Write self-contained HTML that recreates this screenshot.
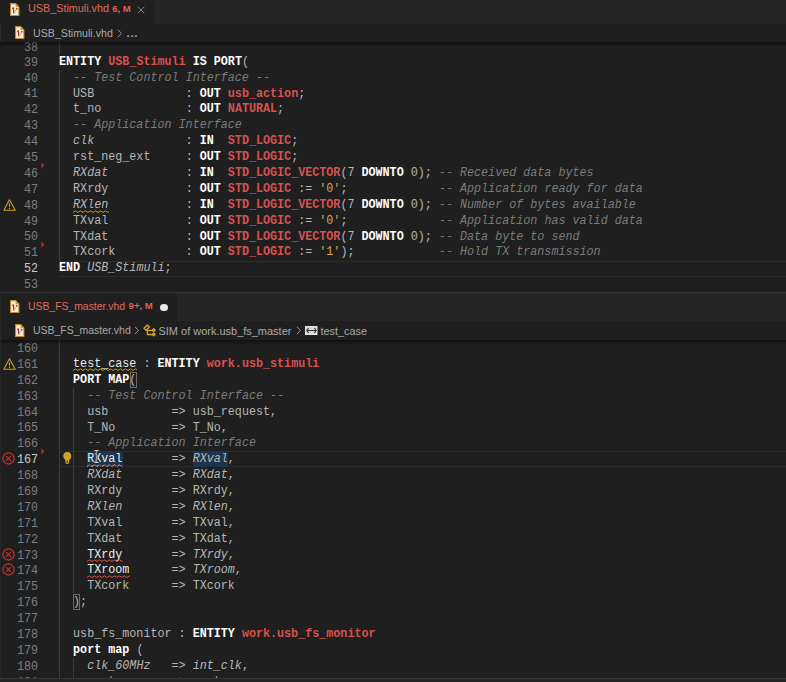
<!DOCTYPE html><html><head><meta charset="utf-8"><style>
*{margin:0;padding:0;box-sizing:border-box}
html,body{width:786px;height:682px;overflow:hidden;background:#1f1f1f}
body{position:relative;font-family:"Liberation Sans",sans-serif}
.abs{position:absolute}
.tabbar{position:absolute;left:0;width:786px;height:28px;background:#262626}
.tab{position:absolute;left:0;top:0;height:28px;background:#1f1f1f}
.tabtxt{position:absolute;font-size:11px;color:#e06a5c;white-space:pre;line-height:14px}
.crumb{position:absolute;left:0;width:786px;background:#1f1f1f}
.crtxt{position:absolute;font-size:11px;color:#a9a9a9;white-space:pre;line-height:14px}
.shadow{position:absolute;left:0;width:786px;height:5px;background:linear-gradient(rgba(0,0,0,0.45),rgba(0,0,0,0))}
.ln{position:absolute;left:0;width:38px;text-align:right;transform:scaleX(0.9530969060707694);transform-origin:right top;font-family:"Liberation Mono",monospace;font-size:12.3px;line-height:15.885px;height:15.885px;color:#7e7e7e;white-space:pre}
.ln.act{color:#c8c8c8}
.cl{position:absolute;left:59.3px;transform:scaleX(0.9530969060707694);transform-origin:left top;font-family:"Liberation Mono",monospace;font-size:12.3px;line-height:15.885px;height:15.885px;white-space:pre;color:#bababa}
.i,.p{color:#b6b6b6}
.ii{color:#b6b6b6;font-style:italic}
.w{color:#ececec}
.k{color:#ffffff;font-weight:bold}
.t{color:#d6524e;font-weight:bold}
.c{color:#7b7b7b;font-style:italic}
.s{color:#d7a54b}
.g{position:absolute;width:1px}
.curline{position:absolute;left:59px;width:727px;border-top:1px solid #2c2c2c;border-bottom:1px solid #2c2c2c}
</style></head><body><div class="tabbar" style="top:-4px"><div class="tab" style="width:155px"></div></div>
<svg class="abs" style="left:10px;top:3px" width="10" height="13" viewBox="0 0 10 13"><path d="M0.6 0.6H5.6L8.9 3.9V12.4H0.6Z" fill="#f6f1d6" stroke="#bf8f2e" stroke-width="1.05"/><path d="M5.6 0.6V3.9H8.9Z" fill="#c99a38"/><path d="M2.1 5.3L3.4 5.1L3.9 10.5" fill="none" stroke="#c3282b" stroke-width="1.35"/><path d="M6.6 5.9L4.2 10.5" fill="none" stroke="#cbb89e" stroke-width="1"/><circle cx="6.7" cy="5.7" r="0.85" fill="#c3282b"/></svg>
<div class="tabtxt" style="left:28px;top:1.3px;font-size:10.8px">USB_Stimuli.vhd</div>
<div class="tabtxt" style="left:112.2px;top:1.5px;font-size:9.6px;font-weight:bold;color:#d9665a">6, M</div>
<svg class="abs" style="left:137px;top:6px" width="8" height="8" viewBox="0 0 8 8"><path d="M0.7 0.7L7.3 7.3M7.3 0.7L0.7 7.3" stroke="#8c8c8c" stroke-width="0.9"/></svg>
<div class="crumb" style="top:24px;height:17.5px"></div>
<div class="abs" style="left:0;top:24px;width:1px;height:17.5px;background:#2c2c2c"></div>
<svg class="abs" style="left:15px;top:26px" width="10" height="13" viewBox="0 0 10 13"><path d="M0.6 0.6H5.6L8.9 3.9V12.4H0.6Z" fill="#f6f1d6" stroke="#bf8f2e" stroke-width="1.05"/><path d="M5.6 0.6V3.9H8.9Z" fill="#c99a38"/><path d="M2.1 5.3L3.4 5.1L3.9 10.5" fill="none" stroke="#c3282b" stroke-width="1.35"/><path d="M6.6 5.9L4.2 10.5" fill="none" stroke="#cbb89e" stroke-width="1"/><circle cx="6.7" cy="5.7" r="0.85" fill="#c3282b"/></svg>
<div class="crtxt" style="left:33px;top:25.5px;font-size:10.65px">USB_Stimuli.vhd</div>
<svg class="abs" style="left:117.3px;top:28.6px" width="6" height="9" viewBox="0 0 6 9"><path d="M0.8 0.7L4.6 4.4L0.8 8.1" fill="none" stroke="#9a9a9a" stroke-width="1"/></svg>
<div class="crtxt" style="left:126.6px;top:25.5px;font-size:11.6px;letter-spacing:0.6px;font-weight:bold">...</div>
<div class="abs" style="left:0;top:41.5px;width:786px;height:250.5px;overflow:hidden"><div class="abs" style="left:0;top:-41.5px;width:786px;height:682px">
<div class="curline" style="top:260.99px;height:15.88px"></div>
<div class="g" style="left:59.0px;top:0.00px;height:54.48px;background:#3c3c3c"></div>
<div class="g" style="left:59.0px;top:70.37px;height:190.62px;background:#3c3c3c"></div>
<div class="ln" style="top:40.80px">38</div><div class="ln" style="top:55.69px">39</div><div class="cl" style="top:54.78px"><span class="k">ENTITY</span><span class="i"> </span><span class="t">USB_Stimuli</span><span class="i"> </span><span class="k">IS</span><span class="i"> </span><span class="k">PORT</span><span class="p">(</span></div><div class="ln" style="top:71.57px">40</div><div class="cl" style="top:70.67px"><span class="i">  </span><span class="c">-- Test Control Interface --</span></div><div class="ln" style="top:87.45px">41</div><div class="cl" style="top:86.55px"><span class="i">  </span><span class="i">USB</span><span class="i">             </span><span class="p">: </span><span class="k">OUT</span><span class="i"> </span><span class="t">usb_action</span><span class="p">;</span></div><div class="ln" style="top:103.34px">42</div><div class="cl" style="top:102.44px"><span class="i">  </span><span class="i">t_no</span><span class="i">            </span><span class="p">: </span><span class="k">OUT</span><span class="i"> </span><span class="t">NATURAL</span><span class="p">;</span></div><div class="ln" style="top:119.23px">43</div><div class="cl" style="top:118.33px"><span class="i">  </span><span class="c">-- Application Interface</span></div><div class="ln" style="top:135.11px">44</div><div class="cl" style="top:134.21px"><span class="i">  </span><span class="ii">clk</span><span class="i">             </span><span class="p">: </span><span class="k">IN</span><span class="i">  </span><span class="t">STD_LOGIC</span><span class="p">;</span></div><div class="ln" style="top:150.99px">45</div><div class="cl" style="top:150.09px"><span class="i">  </span><span class="i">rst_neg_ext</span><span class="i">     </span><span class="p">: </span><span class="k">OUT</span><span class="i"> </span><span class="t">STD_LOGIC</span><span class="p">;</span></div><div class="ln" style="top:166.88px">46</div><div class="cl" style="top:165.98px"><span class="i">  </span><span class="ii">RXdat</span><span class="i">           </span><span class="p">: </span><span class="k">IN</span><span class="i">  </span><span class="t">STD_LOGIC_VECTOR</span><span class="p">(7 </span><span class="k">DOWNTO</span><span class="p"> 0); </span><span class="c">-- Received data bytes</span></div><div class="ln" style="top:182.76px">47</div><div class="cl" style="top:181.87px"><span class="i">  </span><span class="i">RXrdy</span><span class="i">           </span><span class="p">: </span><span class="k">OUT</span><span class="i"> </span><span class="t">STD_LOGIC</span><span class="p"> := </span><span class="s">&#x27;0&#x27;</span><span class="p">;</span><span class="i">             </span><span class="c">-- Application ready for data</span></div><div class="ln" style="top:198.65px">48</div><div class="cl" style="top:197.75px"><span class="i">  </span><span class="ii">RXlen</span><span class="i">           </span><span class="p">: </span><span class="k">IN</span><span class="i">  </span><span class="t">STD_LOGIC_VECTOR</span><span class="p">(7 </span><span class="k">DOWNTO</span><span class="p"> 0); </span><span class="c">-- Number of bytes available</span></div><div class="ln" style="top:214.53px">49</div><div class="cl" style="top:213.63px"><span class="i">  </span><span class="i">TXval</span><span class="i">           </span><span class="p">: </span><span class="k">OUT</span><span class="i"> </span><span class="t">STD_LOGIC</span><span class="p"> := </span><span class="s">&#x27;0&#x27;</span><span class="p">;</span><span class="i">             </span><span class="c">-- Application has valid data</span></div><div class="ln" style="top:230.42px">50</div><div class="cl" style="top:229.52px"><span class="i">  </span><span class="i">TXdat</span><span class="i">           </span><span class="p">: </span><span class="k">OUT</span><span class="i"> </span><span class="t">STD_LOGIC_VECTOR</span><span class="p">(7 </span><span class="k">DOWNTO</span><span class="p"> 0); </span><span class="c">-- Data byte to send</span></div><div class="ln" style="top:246.30px">51</div><div class="cl" style="top:245.41px"><span class="i">  </span><span class="i">TXcork</span><span class="i">          </span><span class="p">: </span><span class="k">OUT</span><span class="i"> </span><span class="t">STD_LOGIC</span><span class="p"> := </span><span class="s">&#x27;1&#x27;</span><span class="p">);</span><span class="i">            </span><span class="c">-- Hold TX transmission</span></div><div class="ln act" style="top:262.19px">52</div><div class="cl" style="top:261.29px"><span class="k">END</span><span class="i"> </span><span class="ii">USB_Stimuli</span><span class="p">;</span></div><div class="ln" style="top:278.07px">53</div>
<svg class="abs" style="left:73.37px;top:209.65px;overflow:hidden" width="35.2" height="4" viewBox="0 0 35.2 4"><path d="M0 2.5 l2.5 -1.7 l2.5 1.7 l2.5 -1.7 l2.5 1.7 l2.5 -1.7 l2.5 1.7 l2.5 -1.7 l2.5 1.7 l2.5 -1.7 l2.5 1.7 l2.5 -1.7 l2.5 1.7 l2.5 -1.7 l2.5 1.7 l2.5 -1.7 l2.5 1.7 l2.5 -1.7 l2.5 1.7" fill="none" stroke="#cca700" stroke-width="0.95"/></svg>
<svg class="abs" style="left:2.50px;top:199.25px" width="13" height="12" viewBox="0 0 13 12"><path d="M6.5 0.8L12.2 11.2H0.8Z" fill="none" stroke="#d0a323" stroke-width="1.05" stroke-linejoin="round"/><path d="M6.5 4.2V7.8M6.5 8.8V10" stroke="#d0a323" stroke-width="1.1"/></svg>
<svg class="abs" style="left:41.20px;top:161.88px" width="4" height="7" viewBox="0 0 4 7"><path d="M0.3 0.5L3.6 3.5L0.3 6.5Z" fill="#b32a2a"/></svg>
<svg class="abs" style="left:41.20px;top:241.30px" width="4" height="7" viewBox="0 0 4 7"><path d="M0.3 0.5L3.6 3.5L0.3 6.5Z" fill="#b32a2a"/></svg>
</div></div>
<div class="shadow" style="top:41.5px"></div>
<div class="abs" style="left:0;top:292px;width:786px;height:1px;background:#353535"></div>
<div class="tabbar" style="top:293px"><div class="tab" style="width:177px"></div></div>
<svg class="abs" style="left:10px;top:300px" width="10" height="13" viewBox="0 0 10 13"><path d="M0.6 0.6H5.6L8.9 3.9V12.4H0.6Z" fill="#f6f1d6" stroke="#bf8f2e" stroke-width="1.05"/><path d="M5.6 0.6V3.9H8.9Z" fill="#c99a38"/><path d="M2.1 5.3L3.4 5.1L3.9 10.5" fill="none" stroke="#c3282b" stroke-width="1.35"/><path d="M6.6 5.9L4.2 10.5" fill="none" stroke="#cbb89e" stroke-width="1"/><circle cx="6.7" cy="5.7" r="0.85" fill="#c3282b"/></svg>
<div class="tabtxt" style="left:28px;top:300px;font-size:10.4px">USB_FS_master.vhd</div>
<div class="tabtxt" style="left:128.6px;top:299.3px;font-size:9.6px;font-weight:bold;color:#d9665a">9+, M</div>
<div class="abs" style="left:160px;top:303.5px;width:7.5px;height:7.5px;border-radius:50%;background:#e8e8e8"></div>
<div class="crumb" style="top:321px;height:19px"></div>
<svg class="abs" style="left:15px;top:324px" width="10" height="13" viewBox="0 0 10 13"><path d="M0.6 0.6H5.6L8.9 3.9V12.4H0.6Z" fill="#f6f1d6" stroke="#bf8f2e" stroke-width="1.05"/><path d="M5.6 0.6V3.9H8.9Z" fill="#c99a38"/><path d="M2.1 5.3L3.4 5.1L3.9 10.5" fill="none" stroke="#c3282b" stroke-width="1.35"/><path d="M6.6 5.9L4.2 10.5" fill="none" stroke="#cbb89e" stroke-width="1"/><circle cx="6.7" cy="5.7" r="0.85" fill="#c3282b"/></svg>
<div class="crtxt" style="left:33px;top:324px;font-size:10.47px">USB_FS_master.vhd</div>
<svg class="abs" style="left:134px;top:326px" width="6" height="9" viewBox="0 0 6 9"><path d="M0.8 0.7L4.6 4.4L0.8 8.1" fill="none" stroke="#9a9a9a" stroke-width="1"/></svg>
<svg class="abs" style="left:142px;top:322px" width="16" height="16" viewBox="0 0 16 16"><g fill="none" stroke="#d8a42a" stroke-width="1.4" stroke-linejoin="round"><path d="M2 6.3L5.4 3L7.4 5L4 8.3Z"/><path d="M5.4 7.2V12.5H10.3M5.4 8.4H10.3"/><path d="M10.3 8.2L11.7 6.8L13.1 8.2L11.7 9.6Z"/><path d="M10.3 12.4L11.7 11L13.1 12.4L11.7 13.8Z"/></g></svg>
<div class="crtxt" style="left:158.5px;top:324px;font-size:10.98px">SIM of work.usb_fs_master</div>
<svg class="abs" style="left:296.3px;top:326px" width="6" height="9" viewBox="0 0 6 9"><path d="M0.8 0.7L4.6 4.4L0.8 8.1" fill="none" stroke="#9a9a9a" stroke-width="1"/></svg>
<svg class="abs" style="left:305px;top:326px" width="13" height="9" viewBox="0 0 13 9"><rect x="0.5" y="0.5" width="11.5" height="8" fill="#d8d8d8" stroke="#e4e4e4"/><path d="M3.5 2.2L1.8 4.5L3.5 6.8 M9.5 2.2L11.2 4.5L9.5 6.8 M2.5 4.5H10.5" fill="none" stroke="#303030" stroke-width="1.1"/></svg>
<div class="crtxt" style="left:320.5px;top:324px;font-size:10.85px">test_case</div>
<div class="abs" style="left:0;top:340px;width:786px;height:338px;overflow:hidden"><div class="abs" style="left:0;top:-340px;width:786px;height:682px">
<div class="curline" style="top:451.39px;height:15.88px"></div>
<div class="abs" style="left:87.44px;top:451.39px;width:35.17px;height:15.88px;background:#1d344f"></div>
<div class="abs" style="left:192.96px;top:451.39px;width:35.17px;height:15.88px;background:#1d344f"></div>
<div class="abs" style="left:129.65px;top:371.97px;width:7.04px;height:15.88px;border:1px solid #6a6a6a"></div>
<div class="abs" style="left:73.37px;top:594.36px;width:7.04px;height:15.88px;border:1px solid #6a6a6a"></div>
<div class="g" style="left:59.0px;top:340.00px;height:342.00px;background:#3c3c3c"></div>
<div class="g" style="left:73.0px;top:387.86px;height:206.50px;background:#3c3c3c"></div>
<div class="g" style="left:73.0px;top:657.90px;height:24.10px;background:#3c3c3c"></div>
<div class="ln" style="top:342.00px">160</div><div class="ln" style="top:357.88px">161</div><div class="cl" style="top:356.99px"><span class="i">  </span><span class="w">test_case</span><span class="p"> : </span><span class="k">ENTITY</span><span class="i"> </span><span class="t">work.usb_stimuli</span></div><div class="ln" style="top:373.77px">162</div><div class="cl" style="top:372.87px"><span class="i">  </span><span class="k">PORT</span><span class="i"> </span><span class="k">MAP</span><span class="p">(</span></div><div class="ln" style="top:389.66px">163</div><div class="cl" style="top:388.76px"><span class="i">    </span><span class="c">-- Test Control Interface --</span></div><div class="ln" style="top:405.54px">164</div><div class="cl" style="top:404.64px"><span class="i">    </span><span class="i">usb</span><span class="i">         </span><span class="p">=&gt; </span><span class="i">usb_request</span><span class="p">,</span></div><div class="ln" style="top:421.43px">165</div><div class="cl" style="top:420.53px"><span class="i">    </span><span class="i">T_No</span><span class="i">        </span><span class="p">=&gt; </span><span class="i">T_No</span><span class="p">,</span></div><div class="ln" style="top:437.31px">166</div><div class="cl" style="top:436.41px"><span class="i">    </span><span class="c">-- Application Interface</span></div><div class="ln act" style="top:453.19px">167</div><div class="cl" style="top:452.30px"><span class="i">    </span><span class="w">RXval</span><span class="i">       </span><span class="p">=&gt; </span><span class="ii">RXval</span><span class="p">,</span></div><div class="ln" style="top:469.08px">168</div><div class="cl" style="top:468.18px"><span class="i">    </span><span class="ii">RXdat</span><span class="i">       </span><span class="p">=&gt; </span><span class="ii">RXdat</span><span class="p">,</span></div><div class="ln" style="top:484.96px">169</div><div class="cl" style="top:484.06px"><span class="i">    </span><span class="i">RXrdy</span><span class="i">       </span><span class="p">=&gt; </span><span class="i">RXrdy</span><span class="p">,</span></div><div class="ln" style="top:500.85px">170</div><div class="cl" style="top:499.95px"><span class="i">    </span><span class="ii">RXlen</span><span class="i">       </span><span class="p">=&gt; </span><span class="ii">RXlen</span><span class="p">,</span></div><div class="ln" style="top:516.74px">171</div><div class="cl" style="top:515.83px"><span class="i">    </span><span class="i">TXval</span><span class="i">       </span><span class="p">=&gt; </span><span class="i">TXval</span><span class="p">,</span></div><div class="ln" style="top:532.62px">172</div><div class="cl" style="top:531.72px"><span class="i">    </span><span class="i">TXdat</span><span class="i">       </span><span class="p">=&gt; </span><span class="i">TXdat</span><span class="p">,</span></div><div class="ln" style="top:548.50px">173</div><div class="cl" style="top:547.60px"><span class="i">    </span><span class="w">TXrdy</span><span class="i">       </span><span class="p">=&gt; </span><span class="ii">TXrdy</span><span class="p">,</span></div><div class="ln" style="top:564.39px">174</div><div class="cl" style="top:563.49px"><span class="i">    </span><span class="w">TXroom</span><span class="i">      </span><span class="p">=&gt; </span><span class="ii">TXroom</span><span class="p">,</span></div><div class="ln" style="top:580.28px">175</div><div class="cl" style="top:579.38px"><span class="i">    </span><span class="i">TXcork</span><span class="i">      </span><span class="p">=&gt; </span><span class="i">TXcork</span></div><div class="ln" style="top:596.16px">176</div><div class="cl" style="top:595.26px"><span class="i">  </span><span class="p">);</span></div><div class="ln" style="top:612.05px">177</div><div class="ln" style="top:627.93px">178</div><div class="cl" style="top:627.03px"><span class="i">  </span><span class="i">usb_fs_monitor</span><span class="p"> : </span><span class="k">ENTITY</span><span class="i"> </span><span class="t">work.usb_fs_monitor</span></div><div class="ln" style="top:643.82px">179</div><div class="cl" style="top:642.91px"><span class="i">  </span><span class="k">port</span><span class="i"> </span><span class="k">map</span><span class="p"> (</span></div><div class="ln" style="top:659.70px">180</div><div class="cl" style="top:658.80px"><span class="i">    </span><span class="ii">clk_60MHz</span><span class="i">   </span><span class="p">=&gt; </span><span class="ii">int_clk</span><span class="p">,</span></div><div class="ln" style="top:675.59px">181</div><div class="cl" style="top:674.68px"><span class="i">    </span><span class="i">master_oe</span><span class="i">   </span><span class="p">=&gt; </span><span class="i">master_oe</span><span class="p">,</span></div>
<svg class="abs" style="left:73.37px;top:368.28px;overflow:hidden" width="63.3" height="4" viewBox="0 0 63.3 4"><path d="M0 2.5 l2.5 -1.7 l2.5 1.7 l2.5 -1.7 l2.5 1.7 l2.5 -1.7 l2.5 1.7 l2.5 -1.7 l2.5 1.7 l2.5 -1.7 l2.5 1.7 l2.5 -1.7 l2.5 1.7 l2.5 -1.7 l2.5 1.7 l2.5 -1.7 l2.5 1.7 l2.5 -1.7 l2.5 1.7 l2.5 -1.7 l2.5 1.7 l2.5 -1.7 l2.5 1.7 l2.5 -1.7 l2.5 1.7 l2.5 -1.7 l2.5 1.7 l2.5 -1.7 l2.5 1.7" fill="none" stroke="#cca700" stroke-width="0.95"/></svg>
<svg class="abs" style="left:87.44px;top:463.59px;overflow:hidden" width="35.2" height="4" viewBox="0 0 35.2 4"><path d="M0 2.5 l2.5 -1.7 l2.5 1.7 l2.5 -1.7 l2.5 1.7 l2.5 -1.7 l2.5 1.7 l2.5 -1.7 l2.5 1.7 l2.5 -1.7 l2.5 1.7 l2.5 -1.7 l2.5 1.7 l2.5 -1.7 l2.5 1.7 l2.5 -1.7 l2.5 1.7 l2.5 -1.7 l2.5 1.7" fill="none" stroke="#d84a3a" stroke-width="0.95"/><path d="M0 2.5 l2.5 -1.7 l2.5 1.7 l2.5 -1.7 l2.5 1.7 l2.5 -1.7 l2.5 1.7 l2.5 -1.7 l2.5 1.7 l2.5 -1.7 l2.5 1.7 l2.5 -1.7 l2.5 1.7 l2.5 -1.7 l2.5 1.7 l2.5 -1.7 l2.5 1.7 l2.5 -1.7 l2.5 1.7" fill="none" stroke="#d8a030" stroke-width="1" stroke-dasharray="3.2 3.3" stroke-dashoffset="1.6"/></svg>
<svg class="abs" style="left:87.44px;top:558.90px;overflow:hidden" width="35.2" height="4" viewBox="0 0 35.2 4"><path d="M0 2.5 l2.5 -1.7 l2.5 1.7 l2.5 -1.7 l2.5 1.7 l2.5 -1.7 l2.5 1.7 l2.5 -1.7 l2.5 1.7 l2.5 -1.7 l2.5 1.7 l2.5 -1.7 l2.5 1.7 l2.5 -1.7 l2.5 1.7 l2.5 -1.7 l2.5 1.7 l2.5 -1.7 l2.5 1.7" fill="none" stroke="#e05040" stroke-width="0.95"/></svg>
<svg class="abs" style="left:87.44px;top:574.79px;overflow:hidden" width="42.2" height="4" viewBox="0 0 42.2 4"><path d="M0 2.5 l2.5 -1.7 l2.5 1.7 l2.5 -1.7 l2.5 1.7 l2.5 -1.7 l2.5 1.7 l2.5 -1.7 l2.5 1.7 l2.5 -1.7 l2.5 1.7 l2.5 -1.7 l2.5 1.7 l2.5 -1.7 l2.5 1.7 l2.5 -1.7 l2.5 1.7 l2.5 -1.7 l2.5 1.7 l2.5 -1.7 l2.5 1.7" fill="none" stroke="#e05040" stroke-width="0.95"/></svg>
<svg class="abs" style="left:2.50px;top:357.88px" width="13" height="12" viewBox="0 0 13 12"><path d="M6.5 0.8L12.2 11.2H0.8Z" fill="none" stroke="#d0a323" stroke-width="1.05" stroke-linejoin="round"/><path d="M6.5 4.2V7.8M6.5 8.8V10" stroke="#d0a323" stroke-width="1.1"/></svg>
<svg class="abs" style="left:2.20px;top:452.29px" width="13" height="13" viewBox="0 0 13 13"><circle cx="6.5" cy="6.5" r="5.6" fill="none" stroke="#c93232" stroke-width="1.1"/><path d="M3.9 3.9L9.1 9.1M9.1 3.9L3.9 9.1" stroke="#c93232" stroke-width="1.1"/></svg>
<svg class="abs" style="left:2.20px;top:547.60px" width="13" height="13" viewBox="0 0 13 13"><circle cx="6.5" cy="6.5" r="5.6" fill="none" stroke="#c93232" stroke-width="1.1"/><path d="M3.9 3.9L9.1 9.1M9.1 3.9L3.9 9.1" stroke="#c93232" stroke-width="1.1"/></svg>
<svg class="abs" style="left:2.20px;top:563.49px" width="13" height="13" viewBox="0 0 13 13"><circle cx="6.5" cy="6.5" r="5.6" fill="none" stroke="#c93232" stroke-width="1.1"/><path d="M3.9 3.9L9.1 9.1M9.1 3.9L3.9 9.1" stroke="#c93232" stroke-width="1.1"/></svg>
<svg class="abs" style="left:41.20px;top:448.09px" width="4" height="7" viewBox="0 0 4 7"><path d="M0.3 0.5L3.6 3.5L0.3 6.5Z" fill="#b32a2a"/></svg>
<svg class="abs" style="left:62.80px;top:451.59px" width="9" height="12" viewBox="0 0 9 12"><circle cx="4.3" cy="4.1" r="4" fill="#c9a133"/><path d="M2.3 6.5h4v3.5a2 2 0 0 1 -4 0z" fill="#c9a133"/><circle cx="4.3" cy="9.6" r="0.9" fill="#3a2a10"/></svg>
<svg class="abs" style="left:92.5px;top:449px" width="7" height="15" viewBox="0 0 7 15"><path d="M1 1.5H6 M3.5 1.5V13.5 M1 13.5H6" fill="none" stroke="#111" stroke-width="2" opacity="0.7"/><path d="M1.3 1.5H5.7 M1.3 13.5H5.7" fill="none" stroke="#cfcfcf" stroke-width="1.2"/><path d="M3.5 2V13" fill="none" stroke="#8e8e8e" stroke-width="1.6"/></svg>
</div></div>
<div class="shadow" style="top:340px"></div>
<div class="abs" style="left:0;top:293px;width:1px;height:385px;background:#252525"></div>
<div class="abs" style="left:0;top:678px;width:786px;height:1px;background:#353535"></div>
<div class="abs" style="left:0;top:679px;width:786px;height:3px;background:#262626"></div></body></html>
